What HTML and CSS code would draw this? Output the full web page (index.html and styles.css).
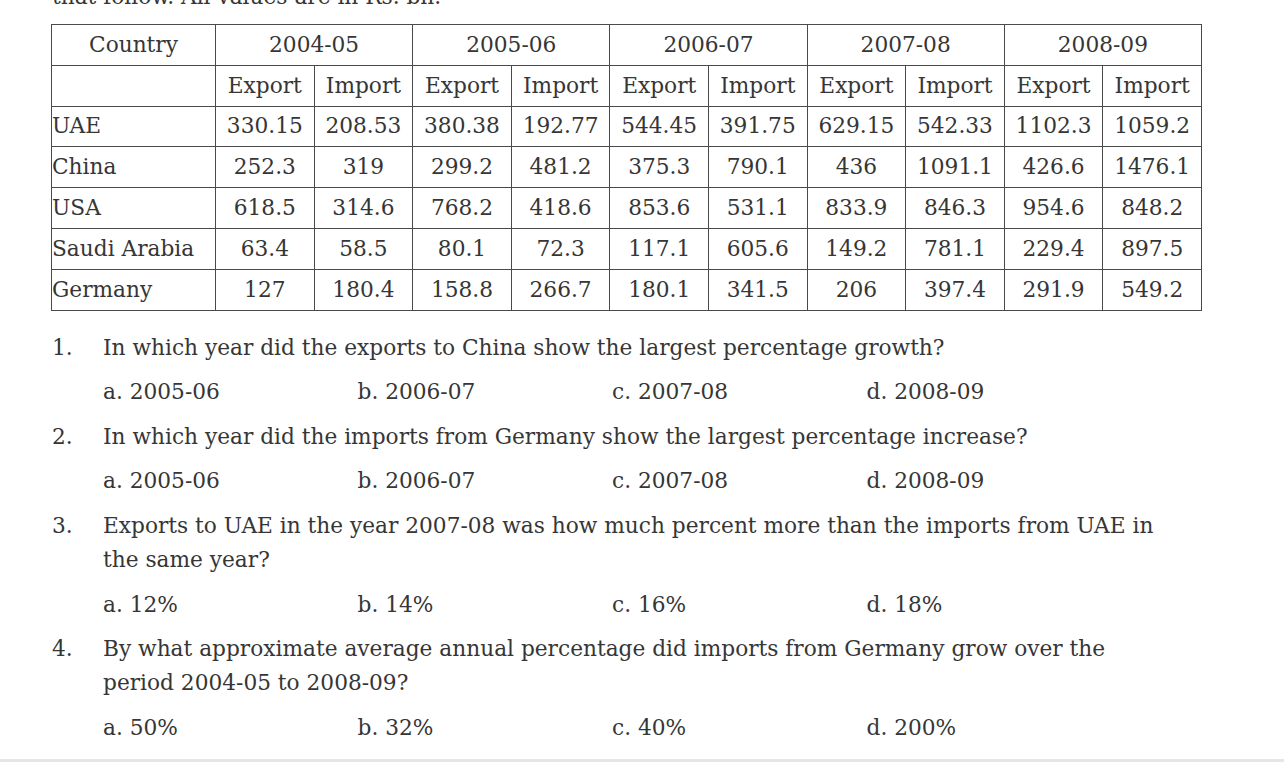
FILE: index.html
```html
<!DOCTYPE html>
<html lang="en">
<head>
<meta charset="utf-8">
<title>Export Import Data</title>
<link rel="stylesheet" href="styles.css">
</head>
<body>
<div class="page">
  <p class="intro">that follow. All values are in Rs. bn.</p>
  <table class="data">
    <colgroup>
      <col class="c-country">
      <col><col><col><col><col><col><col><col><col><col>
    </colgroup>
    <tr>
      <td class="center">Country</td>
      <td colspan="2">2004-05</td>
      <td colspan="2">2005-06</td>
      <td colspan="2">2006-07</td>
      <td colspan="2">2007-08</td>
      <td colspan="2">2008-09</td>
    </tr>
    <tr>
      <td class="name"></td>
      <td>Export</td><td>Import</td>
      <td>Export</td><td>Import</td>
      <td>Export</td><td>Import</td>
      <td>Export</td><td>Import</td>
      <td>Export</td><td>Import</td>
    </tr>
    <tr>
      <td class="name">UAE</td>
      <td>330.15</td><td>208.53</td><td>380.38</td><td>192.77</td><td>544.45</td><td>391.75</td><td>629.15</td><td>542.33</td><td>1102.3</td><td>1059.2</td>
    </tr>
    <tr>
      <td class="name">China</td>
      <td>252.3</td><td>319</td><td>299.2</td><td>481.2</td><td>375.3</td><td>790.1</td><td>436</td><td>1091.1</td><td>426.6</td><td>1476.1</td>
    </tr>
    <tr>
      <td class="name">USA</td>
      <td>618.5</td><td>314.6</td><td>768.2</td><td>418.6</td><td>853.6</td><td>531.1</td><td>833.9</td><td>846.3</td><td>954.6</td><td>848.2</td>
    </tr>
    <tr>
      <td class="name">Saudi Arabia</td>
      <td>63.4</td><td>58.5</td><td>80.1</td><td>72.3</td><td>117.1</td><td>605.6</td><td>149.2</td><td>781.1</td><td>229.4</td><td>897.5</td>
    </tr>
    <tr>
      <td class="name">Germany</td>
      <td>127</td><td>180.4</td><td>158.8</td><td>266.7</td><td>180.1</td><td>341.5</td><td>206</td><td>397.4</td><td>291.9</td><td>549.2</td>
    </tr>
  </table>

  <ol class="questions">
    <li class="q">
      <span class="num">1.</span>
      <div class="qbody">
        <p class="qtext">In which year did the exports to China show the largest percentage growth?</p>
        <div class="opts"><span>a. 2005-06</span><span>b. 2006-07</span><span>c. 2007-08</span><span>d. 2008-09</span></div>
      </div>
    </li>
    <li class="q">
      <span class="num">2.</span>
      <div class="qbody">
        <p class="qtext">In which year did the imports from Germany show the largest percentage increase?</p>
        <div class="opts"><span>a. 2005-06</span><span>b. 2006-07</span><span>c. 2007-08</span><span>d. 2008-09</span></div>
      </div>
    </li>
    <li class="q">
      <span class="num">3.</span>
      <div class="qbody">
        <p class="qtext">Exports to UAE in the year 2007-08 was how much percent more than the imports from UAE in the same year?</p>
        <div class="opts"><span>a. 12%</span><span>b. 14%</span><span>c. 16%</span><span>d. 18%</span></div>
      </div>
    </li>
    <li class="q">
      <span class="num">4.</span>
      <div class="qbody">
        <p class="qtext">By what approximate average annual percentage did imports from Germany grow over the period 2004-05 to 2008-09?</p>
        <div class="opts"><span>a. 50%</span><span>b. 32%</span><span>c. 40%</span><span>d. 200%</span></div>
      </div>
    </li>
  </ol>
</div>
<div class="band"></div>
</body>
</html>
```

FILE: styles.css
```css
html, body {
  margin: 0;
  padding: 0;
  background: #ffffff;
}
body {
  font-family: "DejaVu Serif", "Liberation Serif", serif;
  font-size: 21.7px;
  color: #363636;
  height: 762px;
  overflow: hidden;
  display: flex;
  flex-direction: column;
}
.page {
  flex: 1;
  padding-left: 51px;
  overflow: hidden;
}
.intro {
  margin: -20px 0 10px 1px;
  line-height: 34px;
}
.data {
  border-collapse: collapse;
  table-layout: fixed;
  width: 1151px;
}
.c-country {
  width: 164px;
}
.data td {
  border: 1px solid #4a4a4a;
  height: 39.8px;
  padding: 0;
  text-align: center;
  vertical-align: middle;
  line-height: 24px;
  white-space: nowrap;
}
.data td.name {
  text-align: left;
}
.data td.center {
  text-align: center;
}
.questions {
  list-style: none;
  margin: 20px 0 0 0;
  padding: 0;
}
.q {
  display: flex;
  margin-bottom: 10.3px;
  line-height: 34px;
}
.num {
  width: 51px;
  flex: none;
  padding-left: 1px;
}
.qbody {
  width: 1075px;
}
.qtext {
  margin: 0 0 10.8px 0;
}
.opts {
  display: grid;
  grid-template-columns: repeat(4, 254.5px);
}
.band {
  height: 3px;
  flex: none;
  background: #e6e6e6;
}
```
